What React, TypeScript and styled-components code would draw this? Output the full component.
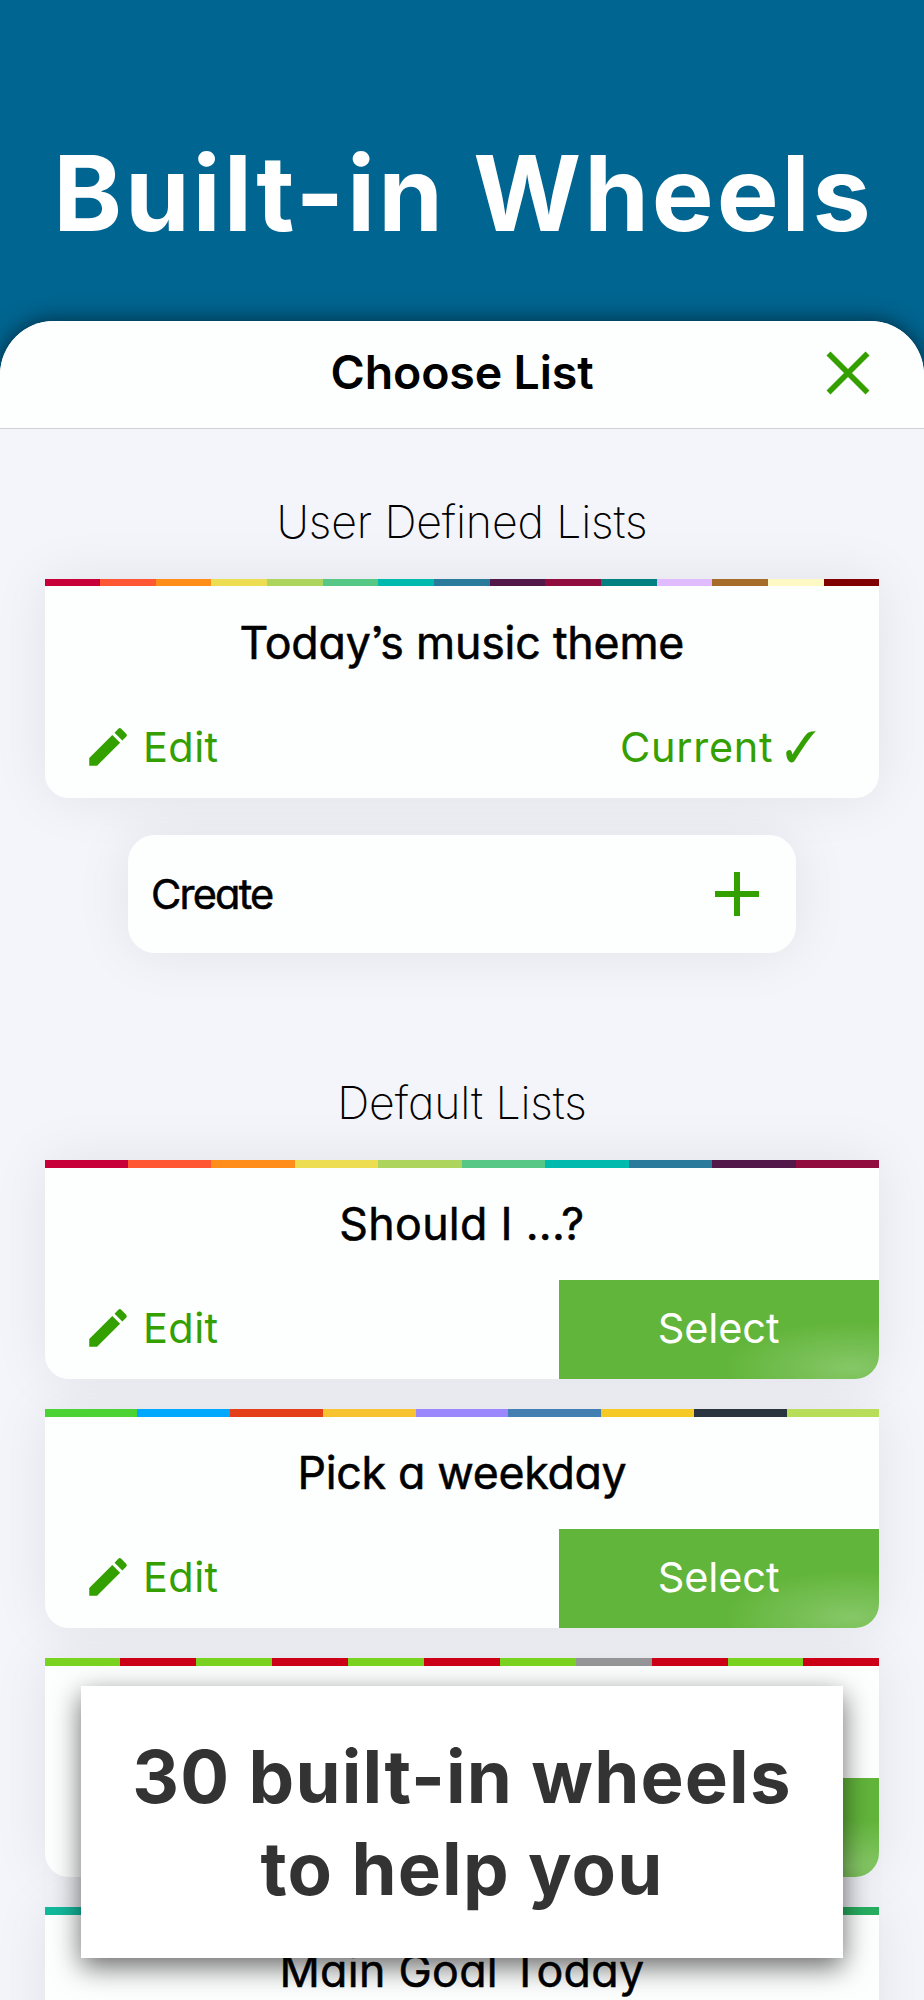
import React from "react";
import styled, { createGlobalStyle } from "styled-components";

const GREEN = "#34a000";

const GlobalStyle = createGlobalStyle`
  *, *::before, *::after { box-sizing: border-box; }
  body {
    margin: 0;
    background: #006591;
    font-family: Inter, "Liberation Sans", sans-serif;
    font-feature-settings: "cv11", "ss03";
    color: #000;
  }
  h1, h2, h3, p { margin: 0; font-weight: inherit; }
  button { border: 0; padding: 0; background: none; font: inherit; color: inherit; font-feature-settings: inherit; }
`;

const Page = styled.main`
  position: relative;
  width: 924px;
  height: 2000px;
  overflow: hidden;
  display: flex;
  flex-direction: column;
  background: #006591;
`;

const Hero = styled.header`
  flex: none;
  height: 320.5px;
  padding-top: 133px;
  text-align: center;
`;

const HeroTitle = styled.h1`
  font-size: 104px;
  line-height: 120px;
  font-weight: 700;
  letter-spacing: 2.9px;
  font-feature-settings: normal;
  color: #fff;
  white-space: nowrap;
  padding-left: 3px;
`;

const Sheet = styled.section`
  flex: 1;
  display: flex;
  flex-direction: column;
  min-height: 0;
  border-radius: 54px 54px 0 0;
  background: #f4f5fa;
  box-shadow: 0 0 22px rgba(0, 0, 0, 0.6);
`;

const SheetHeader = styled.div`
  flex: none;
  height: 108.5px;
  display: grid;
  grid-template-columns: 1fr auto 1fr;
  align-items: center;
  padding: 0 54px 3px;
  border-radius: 54px 54px 0 0;
  border-bottom: 1.5px solid #cfd1d6;
  background: #fdfefe;
`;

const SheetTitle = styled.h2`
  grid-column: 2;
  padding-bottom: 2px;
  font-size: 46.5px;
  line-height: 60px;
  font-weight: 600;
  letter-spacing: -0.15px;
`;

const CloseButton = styled.button`
  justify-self: end;
  width: 44px;
  height: 44px;
  color: ${GREEN};
  svg { display: block; }
`;

const Lists = styled.div`
  isolation: isolate;
  flex: none;
  display: flex;
  flex-direction: column;
  padding: 62.6px 44.7px 0 44.5px;
`;

const GroupLabel = styled.h3<{ $spaced?: boolean }>`
  margin: ${(p) => (p.$spaced ? "119.8px" : "0")} 0 27px;
  text-align: center;
  font-size: 44.7px;
  line-height: 60px;
  font-weight: 200;
  letter-spacing: -0.15px;
`;

const Stack = styled.div`
  display: flex;
  flex-direction: column;
  gap: 29.8px;
`;

/* The shadow sits on a layer behind every card, so that it never tints a neighbour. */
const Raised = styled.div`
  position: relative;
  background: #fdfefe;
  &::before {
    content: "";
    position: absolute;
    inset: 0;
    z-index: -1;
    border-radius: inherit;
    box-shadow: 0 0 56px rgba(0, 0, 20, 0.08);
  }
`;

const CardBox = styled(Raised)`
  height: 219.2px;
  border-radius: 0 0 24px 24px;
  display: flex;
  flex-direction: column;
`;

const Stripe = styled.div`
  display: flex;
  height: 7.5px;
`;

const Swatch = styled.span<{ $color: string }>`
  flex: 1;
  background: ${(p) => p.$color};
`;

const CardTitle = styled.p<{ $spacing: number }>`
  flex: 1;
  display: flex;
  align-items: center;
  justify-content: center;
  padding-top: 1px;
  font-size: 44.7px;
  line-height: 56px;
  font-weight: 400;
  -webkit-text-stroke: 0.55px currentColor;
  letter-spacing: ${(p) => p.$spacing}px;
`;

const CardActions = styled.div`
  display: flex;
  height: 99px;
  font-size: 41.5px;
  line-height: 50px;
`;

const EditButton = styled.button`
  display: flex;
  align-items: center;
  gap: 10px;
  padding: 0 0 3px 38.5px;
  letter-spacing: 0.4px;
  color: ${GREEN};
`;

const CurrentMark = styled.div`
  margin-left: auto;
  display: flex;
  align-items: center;
  gap: 13px;
  padding: 0 63px 3px 0;
  letter-spacing: 0.7px;
  color: ${GREEN};
`;

const SelectButton = styled.button`
  margin-left: auto;
  width: 320.5px;
  border-radius: 0 0 24px 0;
  background: radial-gradient(ellipse 126px 46px at 292px 88px, #86c767, #62b53b);
  padding: 0 1px 3px 0;
  letter-spacing: -0.1px;
  color: #fff;
`;

const CreateCard = styled(Raised)`
  display: flex;
  align-items: center;
  justify-content: space-between;
  height: 118px;
  margin: 37.5px 83.5px 0;
  padding: 0 37px 0 23px;
  border-radius: 27px;
  font-size: 41.5px;
  font-weight: 400;
  -webkit-text-stroke: 0.55px currentColor;
  letter-spacing: -1.8px;
  svg { color: ${GREEN}; }
`;

const Banner = styled.aside`
  position: absolute;
  left: 81px;
  top: 1686px;
  width: 762px;
  height: 272px;
  padding-top: 45px;
  background: #fff;
  box-shadow: 0 9px 26px rgba(0, 0, 0, 0.58);
  text-align: center;
  font-size: 72.5px;
  line-height: 92.3px;
  font-weight: 700;
  letter-spacing: 1.15px;
  font-feature-settings: normal;
  color: #333;
`;

const PencilIcon = () => (
  <svg width="50" height="50" viewBox="0 0 24 24" fill="currentColor">
    <path d="M3 17.25V21h3.75L17.81 9.94l-3.75-3.75L3 17.25zM20.71 7.04a1 1 0 0 0 0-1.41l-2.34-2.34a1 1 0 0 0-1.41 0l-1.83 1.83 3.75 3.75 1.83-1.83z" />
  </svg>
);

const CheckIcon = () => (
  <svg width="30" height="32" viewBox="0 0 30 32" fill="currentColor">
    <path d="M0.2 22.5C0 20.5 1.8 19 3.6 19C5.2 19 5.8 20.3 6.4 23.6C11.5 15.5 17 7.3 20.2 3.5C22.6 0.7 25 0.3 29.8 0.2C24.5 5 15 19.5 9.4 28.6C7.6 31.5 6.4 31.8 5.2 31.5C2.2 30.8 0.6 27 0.2 22.5Z" />
  </svg>
);

const CloseIcon = () => (
  <svg width="44" height="44" viewBox="0 0 44 44" stroke="currentColor" strokeWidth="5.6">
    <path d="M2.5 2.5L41.5 41.5M41.5 2.5L2.5 41.5" />
  </svg>
);

const PlusIcon = () => (
  <svg width="44" height="44" viewBox="0 0 44 44" stroke="currentColor" strokeWidth="6">
    <path d="M22 0V44M0 22H44" />
  </svg>
);

interface WheelCard {
  title?: string;
  spacing?: number;
  colors: string[];
  action?: "current" | "select";
  covered?: boolean;
}

const LIME = "#7bd321";
const RED = "#cc0017";
const GRAY = "#959698";
const BASE = ["#c70039", "#ff5733", "#ff8d1a", "#eddd53", "#add45c", "#57c785", "#00baad", "#2a7b9b", "#511849", "#900c3f"];

const userList: WheelCard = {
  title: "Today’s music theme",
  spacing: -0.2,
  colors: [...BASE, "#008080", "#e0bbff", "#a86c2a", "#fdf8c4", "#800000"],
  action: "current",
};

const defaultLists: WheelCard[] = [
  { title: "Should I ...?", spacing: 0.3, colors: BASE, action: "select" },
  {
    title: "Pick a weekday",
    spacing: -0.3,
    colors: ["#4bd335", "#00a8ff", "#e43f18", "#f7c331", "#9a86fd", "#447fb2", "#f5c926", "#2b353f", "#b8dd58"],
    action: "select",
  },
  { colors: [LIME, RED, LIME, RED, LIME, RED, LIME, GRAY, RED, LIME, RED], action: "select", covered: true },
  { title: "Main Goal Today", spacing: 0.3, colors: ["#13b99c", "#27ae60"] },
];

function Card({ title, spacing = 0, colors, action, covered }: WheelCard) {
  return (
    <CardBox>
      <Stripe>
        {colors.map((c, i) => (
          <Swatch key={i} $color={c} />
        ))}
      </Stripe>
      <CardTitle $spacing={spacing}>{title}</CardTitle>
      <CardActions>
        {action && !covered && (
          <EditButton>
            <PencilIcon />
            Edit
          </EditButton>
        )}
        {action === "current" && (
          <CurrentMark>
            Current
            <CheckIcon />
          </CurrentMark>
        )}
        {action === "select" && <SelectButton>{!covered && "Select"}</SelectButton>}
      </CardActions>
    </CardBox>
  );
}

export default function App() {
  return (
    <Page>
      <GlobalStyle />
      <Hero>
        <HeroTitle>Built-in Wheels</HeroTitle>
      </Hero>
      <Sheet>
        <SheetHeader>
          <SheetTitle>Choose List</SheetTitle>
          <CloseButton aria-label="Close">
            <CloseIcon />
          </CloseButton>
        </SheetHeader>
        <Lists>
          <GroupLabel>User Defined Lists</GroupLabel>
          <Card {...userList} />
          <CreateCard>
            Create
            <PlusIcon />
          </CreateCard>
          <GroupLabel $spaced>Default Lists</GroupLabel>
          <Stack>
            {defaultLists.map((list, i) => (
              <Card key={i} {...list} />
            ))}
          </Stack>
        </Lists>
      </Sheet>
      <Banner>
        <p>30 built-in wheels</p>
        <p>to help you</p>
      </Banner>
    </Page>
  );
}
